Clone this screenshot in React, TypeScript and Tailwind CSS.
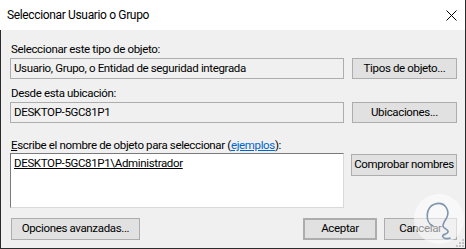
const font = { fontFamily: 'Roboto, "Liberation Sans", Arial, sans-serif' }

function WinButton({ label, className = '' }: { label: string; className?: string }) {
  return (
    <div
      className={`flex items-center justify-center whitespace-nowrap bg-[#e1e1e1] border border-[#adadad] text-[11.5px] text-black ${className}`}
    >
      {label}
    </div>
  )
}

function Watermark() {
  return (
    <svg className="absolute left-[413px] top-[193px]" width="52" height="52" viewBox="0 0 52 52">
      <circle cx="26" cy="26" r="25" fill="#ffffff" fillOpacity="0.55" />
      <path
        d="M20 33 C12 30 12 14 22 11 C32 8 38 18 33 26 C31 29 30 31 30 33 C30 36 36 36 35 39 C34 42 28 41 30 44 C31 46 35 46 37 45"
        fill="none"
        stroke="#7f95ad"
        strokeWidth="1.6"
        strokeLinecap="round"
      />
    </svg>
  )
}

export default function App() {
  return (
    <div
      className="relative w-[466px] h-[249px] flex flex-col overflow-hidden tracking-[-0.35px]"
      style={font}
    >
      {/* Title bar */}
      <div className="h-[30px] bg-white flex items-center justify-between pl-[7px] pr-[8px] border-r border-[#2b2b2b]">
        <span className="text-[12px] text-black">Seleccionar Usuario o Grupo</span>
        <svg width="11" height="11" viewBox="0 0 11 11" className="mt-[1px]">
          <path d="M0.5 0.5 L10.5 10.5 M10.5 0.5 L0.5 10.5" stroke="#000" strokeWidth="1" />
        </svg>
      </div>

      {/* Body */}
      <div className="flex-1 bg-[#f0f0f0] border-l border-r border-b border-[#2b2b2b] pl-[9px] pr-[8px] pt-[11px] text-[11.5px] text-black">
        <div className="leading-[15px] pl-[1px] mt-[1px]">Seleccionar este tipo de objeto:</div>
        <div className="flex items-start mt-[1px]">
          <div className="w-[334px] h-[21px] border border-[#adadad] bg-[#f0f0f0] flex items-center pl-[3px]">
            Usuario, Grupo, o Entidad de seguridad integrada
          </div>
          <WinButton label="Tipos de objeto..." className="ml-[8px] w-[105px] h-[21px]" />
        </div>

        <div className="leading-[15px] pl-[1px] mt-[7px]">Desde esta ubicación:</div>
        <div className="flex items-start mt-[1px]">
          <div className="w-[334px] h-[21px] border border-[#adadad] bg-[#f0f0f0] flex items-center pl-[3px]">
            DESKTOP-5GC81P1
          </div>
          <WinButton label="Ubicaciones..." className="ml-[8px] w-[105px] h-[21px]" />
        </div>

        <div className="leading-[15px] pl-[1px] mt-[15px]">
          <span className="underline">E</span>scribe el nombre de objeto para seleccionar (
          <span className="text-[#0066cc] underline">ejemplos</span>):
        </div>
        <div className="flex items-start">
          <div className="w-[334px] h-[55px] border border-[#7a7a7a] border-r-[#d9d9d9] border-b-[#d9d9d9] bg-white pl-[3px] pt-[1px]">
            <span className="underline">DESKTOP-5GC81P1\Administrador</span>
          </div>
          <WinButton label="Comprobar nombres" className="ml-[7px] w-[106px] h-[22px] mt-[1px]" />
        </div>

        <div className="flex items-start mt-[10px]">
          <WinButton label="Opciones avanzadas..." className="ml-[1px] w-[129px] h-[22px]" />
          <div className="flex-1" />
          <WinButton label="Aceptar" className="w-[74px] h-[22px] border-2 border-[#0078d7]" />
          <WinButton label="Cancelar" className="ml-[7px] w-[73px] h-[22px]" />
        </div>
      </div>

      <Watermark />

      {/* Resize grip */}
      <svg className="absolute right-[2px] bottom-[2px]" width="8" height="8" viewBox="0 0 8 8">
        <rect x="6" y="0" width="2" height="2" fill="#c4c4c4" />
        <rect x="3" y="3" width="2" height="2" fill="#c4c4c4" />
        <rect x="6" y="3" width="2" height="2" fill="#c4c4c4" />
        <rect x="0" y="6" width="2" height="2" fill="#c4c4c4" />
        <rect x="3" y="6" width="2" height="2" fill="#c4c4c4" />
        <rect x="6" y="6" width="2" height="2" fill="#c4c4c4" />
      </svg>
    </div>
  )
}
